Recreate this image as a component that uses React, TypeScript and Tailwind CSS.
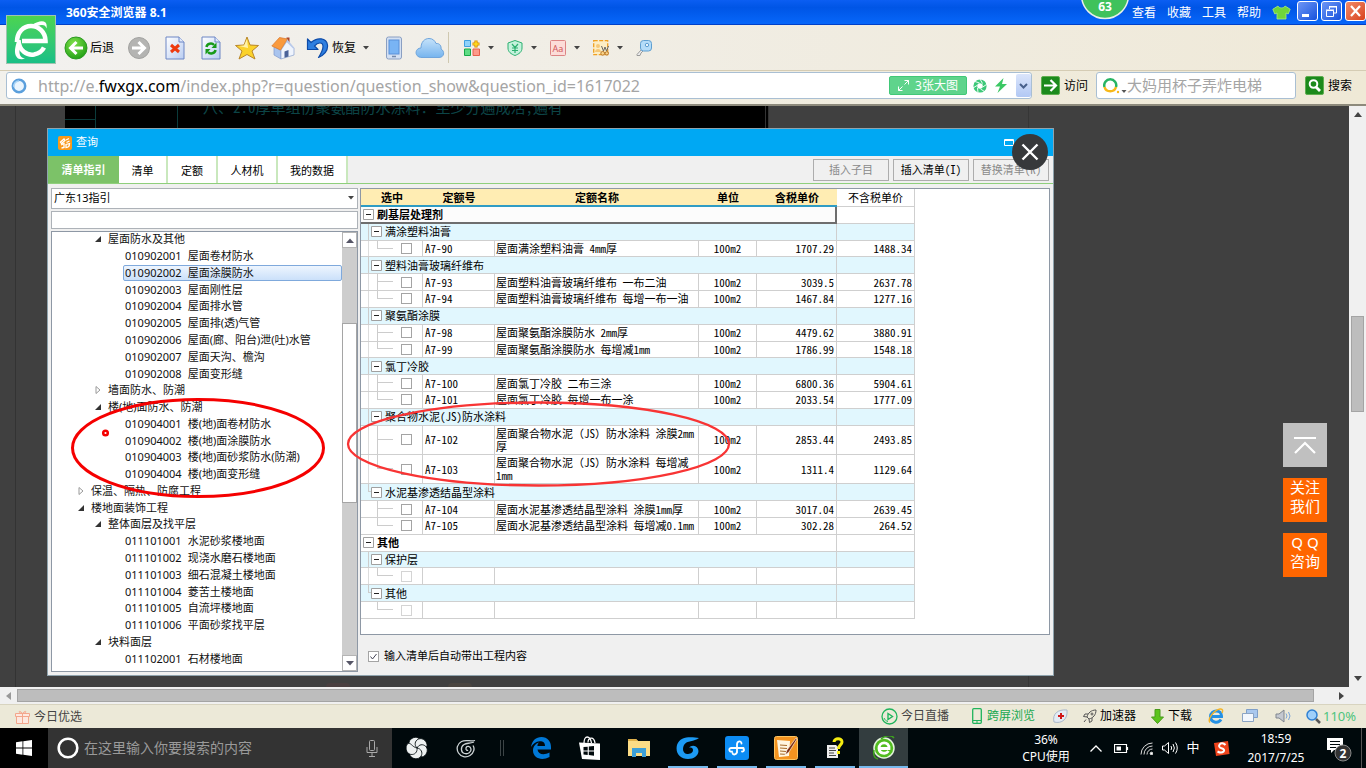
import React from "react";

const UI = "font-['Noto_Sans','Noto_Sans_CJK_SC',sans-serif]";
const GRID = "font-['Noto_Sans_Mono_CJK_SC','Noto_Sans_CJK_SC',monospace]";

/* ---------- browser title bar ---------- */

function TitleBar() {
  const menus = ["查看", "收藏", "工具", "帮助"];
  return (
    <header className="relative flex h-[25px] shrink-0 items-center bg-linear-to-b from-[#0b5ef2] via-[#0055e6] via-30% to-[#0868fb] pl-[66px] text-white">
      <h1 className="text-xs font-bold">360安全浏览器 8.1</h1>
      <div className="absolute inset-x-0 bottom-0 h-px bg-[#0040c8]" />
      <nav className="ml-auto flex h-full items-center">
        {menus.map((m) => (
          <button key={m} className="w-[35px] text-left text-xs whitespace-nowrap">
            {m}
          </button>
        ))}
        <button aria-label="皮肤" className="mr-1.5 w-[19px]">
          <svg viewBox="0 0 19 15" className="h-[15px] w-[19px]">
            <path d="M6 1 .8 4.200 2.800 9 5 8V14h9V8l2.200 1 2-4.800L13 1C12 3.500 7 3.500 6 1Z" fill="#6fd53a" stroke="#a9ee7b" strokeWidth=".8" />
          </svg>
        </button>
        <div className="flex gap-[3px] self-start pt-px">
          <button aria-label="最小化" className="h-5 w-[21px] rounded-[3px] border border-white bg-linear-to-br from-[#6d95f5] to-[#1450dc]">
            <svg viewBox="0 0 19 18" className="h-[18px] w-[19px]">
              <path d="M4 12h7v3H4z" fill="#fff" />
            </svg>
          </button>
          <button aria-label="还原" className="h-5 w-[21px] rounded-[3px] border border-white bg-linear-to-br from-[#6d95f5] to-[#1450dc]">
            <svg viewBox="0 0 19 18" className="h-[18px] w-[19px]" fill="none" stroke="#fff">
              <path d="M7.500 7V5h7v6H12M7 4.500h8" />
              <path d="M4.500 8.500h7v6h-7zM4 8h8" />
            </svg>
          </button>
          <button aria-label="关闭" className="h-5 w-[21px] rounded-[3px] border border-white bg-linear-to-br from-[#f08a68] to-[#d8401a]">
            <svg viewBox="0 0 19 18" className="h-[18px] w-[19px]">
              <path d="m5 4 9 10M14 4 5 14" stroke="#fff" strokeWidth="2.200" />
            </svg>
          </button>
        </div>
      </nav>
      <div className="absolute top-0 right-[237px] z-10 h-5 w-12">
        <svg viewBox="0 0 48 20" className="h-5 w-12">
          <circle cx="24" cy="-5" r="23.500" fill="#3fc25c" stroke="#e9efe9" strokeWidth="1.500" />
        </svg>
        <span className="absolute inset-x-0 top-0 text-center text-xs leading-[14px] font-bold">63</span>
      </div>
    </header>
  );
}

function AppLogo() {
  return (
    <div className="absolute top-[15px] left-1.5 z-20 h-[49px] w-[50px] border border-[#9fc4b0] bg-linear-to-b from-[#4bd44f] to-[#17bf86]">
      <svg viewBox="0 0 48 47" className="h-full w-full">
        <path d="M10 26C10 16 16.500 10 24 10S38.500 16 38.500 25H15" fill="none" stroke="#fff" strokeWidth="4.600" />
        <path d="M11.500 24C12 35 20 39.500 27 38.500c4-.8 8-3 10-7" fill="none" stroke="#fff" strokeWidth="4.500" />
        <path d="M25 9C31 5 36 4.500 38.500 6.500c1 1 1.500 3 1 6-1-4-4.500-4.500-10.500-2Z" fill="#fff" />
        <path d="M9.500 27c-2 6-2.500 12 1.500 15.500 2 1 5 .8 7 .3-6-1.500-6.500-6.800-4.500-12.800Z" fill="#fff" />
      </svg>
    </div>
  );
}

/* ---------- tool bar ---------- */

const cell = "flex h-full w-9 items-center justify-center";

function Caret() {
  return (
    <svg viewBox="0 0 6 4" className="h-1 w-1.5">
      <path d="M0 0h6L3 3.500Z" fill="#444" />
    </svg>
  );
}

function Page({ children }: { children: React.ReactNode }) {
  return (
    <svg viewBox="0 0 20 24" className="h-6 w-5">
      <defs>
        <linearGradient id="sheet" x1="0" y1="0" x2="1" y2="1">
          <stop offset="0" stopColor="#fff" />
          <stop offset="1" stopColor="#b9cdf2" />
        </linearGradient>
      </defs>
      <path d="M1 1h13l5 5v17H1Z" fill="url(#sheet)" stroke="#6c86c4" />
      <path d="M14 1v5h5" fill="#dfe8fa" stroke="#6c86c4" />
      {children}
    </svg>
  );
}

function ToolBar() {
  return (
    <div className="flex h-[46px] shrink-0 items-center border-b border-[#d5ccb4] bg-linear-to-r from-[#f2f1ef] to-[#efe9d8] pl-16">
      <button className="flex w-[57px] items-center gap-0.5 text-xs whitespace-nowrap text-black">
        <svg viewBox="0 0 24 24" className="size-6">
          <defs>
            <radialGradient id="back" cx=".4" cy=".3" r=".8">
              <stop offset="0" stopColor="#7fe04a" />
              <stop offset="1" stopColor="#189a10" />
            </radialGradient>
          </defs>
          <circle cx="12" cy="12" r="11" fill="url(#back)" stroke="#2c9a22" />
          <path d="M19 12H7m5.500-6L6.500 12l6 6" fill="none" stroke="#fff" strokeWidth="3" />
        </svg>
        后退
      </button>
      <button aria-label="前进" className={cell}>
        <svg viewBox="0 0 24 24" className="size-6">
          <circle cx="12" cy="12" r="10.500" fill="#b4b4b2" stroke="#a2a2a0" />
          <path d="M5 12h12m-5.500-6 6 6-6 6" fill="none" stroke="#fff" strokeWidth="3" />
        </svg>
      </button>
      <button aria-label="停止" className={cell}>
        <Page>
          <path d="m6 9 8 7M14 9l-8 7" stroke="#ee3a10" strokeWidth="3" />
        </Page>
      </button>
      <button aria-label="刷新" className={cell}>
        <Page>
          <path d="M5.500 11C6 7.500 11 6.500 13 9" fill="none" stroke="#189a18" strokeWidth="2.500" />
          <path d="M15.500 6.500V12h-5Z" fill="#189a18" />
          <path d="M14.500 14c-.5 3.500-5.500 4.500-7.500 2" fill="none" stroke="#189a18" strokeWidth="2.500" />
          <path d="M4.500 18.500V13h5Z" fill="#189a18" />
        </Page>
      </button>
      <button aria-label="收藏" className={cell}>
        <svg viewBox="0 0 24 24" className="size-6">
          <path d="m12 1 3 8 8.500.5-6.500 5.500 3 8L12 18.500 4 23l3-8L.5 9.500 9 9Z" fill="#fbd22a" stroke="#b8862a" strokeLinejoin="round" />
          <path d="m12 3 1 9-9-2 5-.5Z" fill="#fff2a8" />
        </svg>
      </button>
      <button aria-label="主页" className={cell}>
        <svg viewBox="0 0 24 24" className="size-6">
          <path d="M15.500 1.500h3v6h-3z" fill="#a8452c" />
          <path d="m3 10 7 5v8l-7-4Z" fill="#a9c4ee" stroke="#7f9acb" strokeWidth=".7" />
          <path d="m10 14 6-9 7 7v7l-13 4Z" fill="#eff4fd" stroke="#8aa2cf" strokeWidth=".7" />
          <path d="M13.500 15.500 17.500 14v6.500l-4 1.300Z" fill="#4a6298" />
          <path d="M.8 10 8.500 1.500l8 1.500L9.500 14Z" fill="#f99a3e" stroke="#d9762a" strokeWidth=".7" />
          <path d="m16 3 7.500 9-1.500.5L15.500 6Z" fill="#b9caea" />
        </svg>
      </button>
      <button className="flex w-[75px] items-center gap-[3px] pl-1 text-xs whitespace-nowrap text-black">
        <svg viewBox="0 0 24 24" className="size-6">
          <path d="M2.500 3v10.500H13L9.500 10C13 5.800 18 6 18 10.500c0 4-2 7-4.500 11C20 18.500 23 13.500 22.500 9 21.500 1.500 12 1 6 6.500Z" fill="#2f7fe0" stroke="#0d4ba8" strokeWidth="1.200" strokeLinejoin="round" />
        </svg>
        恢复
        <span className="ml-1"><Caret /></span>
      </button>
      <button aria-label="手机" className={cell}>
        <svg viewBox="0 0 18 24" className="h-6 w-[18px]">
          <rect x="1.500" y="1" width="15" height="22" rx="2" fill="#d4e0f2" stroke="#8a9fc2" />
          <rect x="4" y="4" width="10" height="14" fill="#79b4f4" stroke="#5b90d8" />
          <path d="M7 20.500h4" stroke="#7388aa" strokeWidth="1.500" />
        </svg>
      </button>
      <button aria-label="云" className={cell}>
        <svg viewBox="0 0 30 22" className="h-[22px] w-[30px]">
          <defs>
            <linearGradient id="cloud" x1="0" y1="0" x2="0" y2="1">
              <stop offset="0" stopColor="#c5e2fa" />
              <stop offset="1" stopColor="#76b4ee" />
            </linearGradient>
          </defs>
          <path d="M7 20.500C-1 20.500-.5 11 6 11 6 5 9.500 1.500 14 1.500c4 0 6 2.500 7 5 4-.5 5.500 3 5 5.500 4 2 3.500 8.500-2 8.500Z" fill="url(#cloud)" stroke="#6fa5dc" />
        </svg>
      </button>
      <div className="h-[31px] w-px bg-[#cfc8b0]" />
      <div className="ml-[15px] flex">
        <button aria-label="扩展" className="flex w-[43px] items-center gap-2">
          <svg viewBox="0 0 16 16" className="size-4">
            <path d="M.5.500h6v6h-6z" fill="#8fd2fb" stroke="#3f9fe0" />
            <path d="M.5 9h6v6.500h-6z" fill="#5fdc84" stroke="#18a848" />
            <path d="M9 9h6.500v6.500H9z" fill="#fd9a8a" stroke="#e6604c" />
            <path d="M12 .5v7M8.500 4h7" stroke="#d88a00" strokeWidth="3.200" />
            <path d="M12 1.200v5.600M9.200 4h5.600" stroke="#ffdc20" strokeWidth="1.500" />
          </svg>
          <Caret />
        </button>
        <button aria-label="网银" className="flex w-[43px] items-center gap-2">
          <svg viewBox="0 0 16 16" className="size-4" fill="none" stroke="#2cb070">
            <path d="m8 .5 7 2.500v5c0 4-3 6-7 7.500C4 14 1 12 1 8V3Z" fill="#c4f2dc" />
            <path d="m5 4 3 3.500L11 4M5 8h6M5 10.500h6M8 7.500V13" strokeWidth="1.200" />
          </svg>
          <Caret />
        </button>
        <button aria-label="翻译" className="flex w-[43px] items-center gap-2">
          <svg viewBox="0 0 16 16" className="size-4">
            <rect x=".5" y=".5" width="15" height="15" rx="1" fill="#fcdcd8" stroke="#dc8484" />
            <text x="8" y="11.500" textAnchor="middle" fontSize="9" fill="#d05858" fontFamily="Noto Sans">Aa</text>
          </svg>
          <Caret />
        </button>
        <button aria-label="截图" className="flex w-[43px] items-center gap-2">
          <svg viewBox="0 0 16 16" className="size-4">
            <rect x=".7" y=".7" width="14" height="14" fill="#fdeec4" stroke="#f0a020" strokeWidth="1.300" strokeDasharray="4 1.500" />
            <circle cx="5" cy="6" r="2" fill="#f6c878" />
            <path d="M2 12c0-4 6-4 6 0Z" fill="#f6c878" />
            <path d="m8.500 6 2 5 1.500-4 1.500 4 2-5" fill="none" stroke="#666" />
            <circle cx="9.700" cy="13.300" r="1.900" fill="#fbd488" stroke="#b8782a" />
            <circle cx="13.800" cy="13.300" r="1.700" fill="#fbd488" stroke="#b8782a" />
          </svg>
          <Caret />
        </button>
        <button aria-label="登录管家" className="flex w-[43px] items-center">
          <svg viewBox="0 0 16 16" className="size-4">
            <path d="M1 14.500 6 9l1.500 1.500L5 13l-1 2.500H1Z" fill="#eee" stroke="#999" />
            <rect x="4.500" y=".5" width="11" height="10.500" rx="3" fill="#b4dcf8" stroke="#5f9fd0" />
            <circle cx="11" cy="5" r="1.700" fill="#e8f4fc" stroke="#5f9fd0" />
          </svg>
        </button>
      </div>
    </div>
  );
}

/* ---------- address bar ---------- */

function AddressBar() {
  return (
    <div className="flex h-[35px] shrink-0 items-center border-b-2 border-[#8d8a7c] bg-linear-to-r from-[#f2f1ec] to-[#efe9d6] pr-3.5 pb-1 pl-1.5">
      <div className="flex h-[27px] flex-1 items-center rounded-[3px] border border-[#a9bfd3] bg-white pl-1">
        <svg viewBox="0 0 16 16" className="size-4 shrink-0">
          <circle cx="8" cy="8" r="6.200" fill="#eaf5fe" stroke="#5b9fdc" strokeWidth="2.500" />
          <path d="M3 9a5 5 0 0 1 5-6" fill="none" stroke="#a9d4f6" strokeWidth="1.500" />
        </svg>
        <div className="ml-[11px] flex-1 text-base whitespace-nowrap text-[#a5a5a5]">
          http://e.<span className="text-black">fwxgx.com</span>/index.php?r=question/question_show&amp;question_id=1617022
        </div>
        <button className="flex h-[19px] w-[78px] items-center justify-center gap-1.5 rounded-xs border border-[#41c878] bg-[#5fd48c] text-xs whitespace-nowrap text-white">
          <svg viewBox="0 0 11 11" className="size-[11px]" fill="none" stroke="#fff">
            <path d="M6.500.5h4v4M10.500.5 6.500 4.500M4.500 10.500h-4v-4M.5 10.500l4-4" />
          </svg>
          3张大图
        </button>
        <button aria-label="加速" className="ml-1.5">
          <svg viewBox="0 0 14 14" className="size-3.5" fill="none" stroke="#3cc878">
            <circle cx="7" cy="7" r="4.700" strokeWidth="3.800" />
            <path d="M7 0 9.500 4.500M13.500 5.500 9.800 8M11.500 12.500 7.500 10M5 13.500 4.500 9M0 9 4 6.500M2 2.500 6.500 4" stroke="#fff" strokeWidth=".9" />
          </svg>
        </button>
        <button aria-label="极速模式" className="ml-2">
          <svg viewBox="0 0 12 15" className="h-[15px] w-3">
            <path d="M8.500 0 0 8.500h5L2.500 15 12 6H7Z" fill="#3cc864" />
          </svg>
        </button>
        <button aria-label="历史地址" className="ml-[9px] flex h-[23px] w-[15px] items-center justify-center rounded-xs bg-linear-to-b from-[#dbe5fb] to-[#b2c8f4]">
          <svg viewBox="0 0 9 6" className="h-1.5 w-[9px]">
            <path d="m1 1 3.500 3.500L8 1" fill="none" stroke="#48608c" strokeWidth="2" />
          </svg>
        </button>
      </div>
      <button className="ml-[9px] flex items-center gap-1 text-xs whitespace-nowrap text-black">
        <svg viewBox="0 0 19 19" className="size-[19px]">
          <rect x=".5" y=".5" width="18" height="18" rx="1.500" fill="#1c8a1c" stroke="#5fae50" />
          <path d="M3 9.500h11M9.500 4l5.500 5.500L9.500 15" fill="none" stroke="#fff" strokeWidth="2.200" />
        </svg>
        访问
      </button>
      <div className="ml-2 flex h-[27px] w-[200px] items-center rounded-[3px] border border-[#a9bfd3] bg-white pl-1.5">
        <svg viewBox="0 0 24 16" className="h-4 w-6 shrink-0">
          <path d="M1.500 9A6 6 0 1 1 13 9" fill="none" stroke="#28b464" strokeWidth="2.500" />
          <path d="M1.500 9A6 6 0 0 0 13 9" fill="none" stroke="#f8b818" strokeWidth="2.500" />
          <circle cx="15" cy="14" r="1.200" fill="#f8b818" />
          <path d="M18.500 12h5L21 15Z" fill="#555" />
        </svg>
        <input aria-label="搜索" placeholder="大妈用杯子弄炸电梯" className="w-full min-w-0 text-[15px] outline-none placeholder:text-[#a5a5a5]" />
      </div>
      <button className="ml-[9px] flex items-center gap-1 text-xs whitespace-nowrap text-black">
        <svg viewBox="0 0 19 19" className="size-[19px]">
          <rect x=".5" y=".5" width="18" height="18" rx="1.500" fill="#1c8a1c" stroke="#5fae50" />
          <circle cx="8.500" cy="8" r="3.800" fill="none" stroke="#fff" strokeWidth="2" />
          <path d="m11 11 4 4" stroke="#fff" strokeWidth="2.800" />
        </svg>
        搜索
      </button>
    </div>
  );
}

/* ---------- query dialog ---------- */

type Node = { level: 0 | 1 | 2; open?: boolean; code?: string; name: string; selected?: boolean };

const leaf = (code: string, name: string, selected = false): Node => ({ level: 2, code, name, selected });

const nodes: Node[] = [
  { level: 1, open: true, name: "屋面防水及其他" },
  leaf("010902001", "屋面卷材防水"),
  leaf("010902002", "屋面涂膜防水", true),
  leaf("010902003", "屋面刚性层"),
  leaf("010902004", "屋面排水管"),
  leaf("010902005", "屋面排(透)气管"),
  leaf("010902006", "屋面(廊、阳台)泄(吐)水管"),
  leaf("010902007", "屋面天沟、檐沟"),
  leaf("010902008", "屋面变形缝"),
  { level: 1, open: false, name: "墙面防水、防潮" },
  { level: 1, open: true, name: "楼(地)面防水、防潮" },
  leaf("010904001", "楼(地)面卷材防水"),
  leaf("010904002", "楼(地)面涂膜防水"),
  leaf("010904003", "楼(地)面砂浆防水(防潮)"),
  leaf("010904004", "楼(地)面变形缝"),
  { level: 0, open: false, name: "保温、隔热、防腐工程" },
  { level: 0, open: true, name: "楼地面装饰工程" },
  { level: 1, open: true, name: "整体面层及找平层" },
  leaf("011101001", "水泥砂浆楼地面"),
  leaf("011101002", "现浇水磨石楼地面"),
  leaf("011101003", "细石混凝土楼地面"),
  leaf("011101004", "菱苦土楼地面"),
  leaf("011101005", "自流坪楼地面"),
  leaf("011101006", "平面砂浆找平层"),
  { level: 1, open: true, name: "块料面层" },
  leaf("011102001", "石材楼地面"),
];

function Arrow({ open }: { open?: boolean }) {
  return (
    <svg viewBox="0 0 8 8" className="mr-1.5 size-2 shrink-0">
      {open ? <path d="M7 1v6H1Z" fill="#333" /> : <path d="M2 .5 6 4 2 7.500Z" fill="#fff" stroke="#999" />}
    </svg>
  );
}

function Tree() {
  return (
    <div className="flex min-h-0 flex-1 border border-[#8e98a5] bg-white">
      <ul className="-mt-px grid flex-1 auto-rows-fr pb-1 text-[11px] leading-[14px] text-[#111]">
        {nodes.map((n) => {
          if (n.level === 2)
            return (
              <li key={n.code} className="flex pl-[71px]">
                <button
                  className={
                    n.selected
                      ? "flex flex-1 items-center gap-1.5 rounded-xs border border-[#7fa9dc] bg-linear-to-b from-[#eef5fe] to-[#cbe0fa] pl-px whitespace-nowrap"
                      : "flex flex-1 items-center gap-1.5 border border-transparent pl-px whitespace-nowrap"
                  }
                >
                  <span>{n.code}</span>
                  <span>{n.name}</span>
                </button>
              </li>
            );
          return (
            <li key={n.name} className={n.level === 1 ? "flex pl-[42px]" : "flex pl-[25px]"}>
              <button className="flex items-center whitespace-nowrap">
                <Arrow open={n.open} />
                {n.name}
              </button>
            </li>
          );
        })}
      </ul>
      <div className="flex w-[15px] flex-col bg-[#cdcdcd]">
        <button aria-label="向上" className="flex h-4 items-center justify-center border border-[#b4b4b4] bg-white">
          <svg viewBox="0 0 8 5" className="h-[5px] w-2"><path d="M0 5h8L4 .5Z" fill="#556" /></svg>
        </button>
        <div className="flex-75" />
        <div className="flex-179 border border-[#a5a5a5] bg-white" />
        <div className="flex-152" />
        <button aria-label="向下" className="flex h-4 items-center justify-center border border-[#b4b4b4] bg-white">
          <svg viewBox="0 0 8 5" className="h-[5px] w-2"><path d="M0 0h8L4 4.500Z" fill="#556" /></svg>
        </button>
      </div>
    </div>
  );
}

type Row =
  | { kind: "top"; name: string; focus?: boolean }
  | { kind: "group"; name: string; end?: boolean }
  | { kind: "item"; code: string; name: string; unit: string; tax: string; net: string; end?: boolean; tall?: boolean; inner?: boolean };

const item = (code: string, name: string, tax: string, net: string, end = false, tall = false, inner = true): Row => ({
  kind: "item", code, name, unit: code ? "100m2" : "", tax, net, end, tall, inner,
});

const rows: Row[] = [
  { kind: "top", name: "刷基层处理剂", focus: true },
  { kind: "group", name: "满涂塑料油膏" },
  item("A7-90", "屋面满涂塑料油膏 4mm厚", "1707.29", "1488.34", true),
  { kind: "group", name: "塑料油膏玻璃纤维布" },
  item("A7-93", "屋面塑料油膏玻璃纤维布 一布二油", "3039.5", "2637.78"),
  item("A7-94", "屋面塑料油膏玻璃纤维布 每增一布一油", "1467.84", "1277.16", true),
  { kind: "group", name: "聚氨酯涂膜" },
  item("A7-98", "屋面聚氨酯涂膜防水 2mm厚", "4479.62", "3880.91"),
  item("A7-99", "屋面聚氨酯涂膜防水 每增减1mm", "1786.99", "1548.18", true),
  { kind: "group", name: "氯丁冷胶" },
  item("A7-100", "屋面氯丁冷胶 二布三涂", "6800.36", "5904.61"),
  item("A7-101", "屋面氯丁冷胶 每增一布一涂", "2033.54", "1777.09", true),
  { kind: "group", name: "聚合物水泥(JS)防水涂料" },
  item("A7-102", "屋面聚合物水泥（JS）防水涂料 涂膜2mm厚", "2853.44", "2493.85", false, true),
  item("A7-103", "屋面聚合物水泥（JS）防水涂料 每增减1mm", "1311.4", "1129.64", true, true),
  { kind: "group", name: "水泥基渗透结晶型涂料", end: true },
  item("A7-104", "屋面水泥基渗透结晶型涂料 涂膜1mm厚", "3017.04", "2639.45", false, false, false),
  item("A7-105", "屋面水泥基渗透结晶型涂料 每增减0.1mm", "302.28", "264.52", true, false, false),
  { kind: "top", name: "其他" },
  { kind: "group", name: "保护层" },
  item("", "", "", "", true),
  { kind: "group", name: "其他", end: true },
  item("", "", "", "", true, false, false),
];

function Minus() {
  return (
    <svg viewBox="0 0 11 11" className="size-[11px] shrink-0">
      <path d="M.5.500h10v10H.5z" fill="#fff" stroke="#a0a0a0" />
      <path d="M3 5.500h5" stroke="#222" />
    </svg>
  );
}

const td = "border-r border-b border-[#cfcfcf] p-0";

function PriceTable() {
  return (
    <table className={`${GRID} h-[430px] w-[554px] table-fixed border-separate border-spacing-0 text-[11px] leading-[13px] text-black`}>
      <colgroup>
        <col className="w-[62px]" />
        <col className="w-[72px]" />
        <col className="w-[204px]" />
        <col className="w-[58px]" />
        <col className="w-20" />
        <col className="w-[78px]" />
      </colgroup>
      <thead>
        <tr>
          {["选中", "定额号", "定额名称", "单位", "含税单价"].map((h) => (
            <th key={h} className="h-[18px] border-b-2 border-[#2f9cc4] bg-[#ffedb3] p-0 font-bold">{h}</th>
          ))}
          <th className={`${td} font-normal`}>不含税单价</th>
        </tr>
      </thead>
      <tbody>
        {rows.map((r, i) => {
          if (r.kind === "top")
            return (
              <tr key={i}>
                <td colSpan={5} className={r.focus ? "h-4 border-r-2 border-b-2 border-[#6e6e6e] bg-[#fcfcfc] p-0" : `${td} h-4`}>
                  <div className="flex items-center gap-[3px] pl-0.5 font-bold"><Minus />{r.name}</div>
                </td>
                <td className={td} />
              </tr>
            );
          if (r.kind === "group")
            return (
              <tr key={i} className="bg-[#e1f7fe]">
                <td colSpan={5} className={`${td} relative h-4`}>
                  <span className={r.end ? "absolute top-0 left-[7px] h-1/2 w-[3px] border-b border-l border-[#ccc]" : "absolute inset-y-0 left-[7px] border-l border-[#ccc]"} />
                  <div className="flex items-center gap-[3px] pl-2.5"><Minus />{r.name}</div>
                </td>
                <td className={td} />
              </tr>
            );
          return (
            <tr key={i}>
              <td className={r.tall ? `${td} relative h-7` : `${td} relative h-4`}>
                {r.inner && <span className="absolute inset-y-0 left-[7px] border-l border-[#ddd]" />}
                <span className="absolute top-0 left-4 h-1/2 w-4 border-b border-l border-[#ccc]" />
                {!r.end && <span className="absolute inset-y-0 left-4 border-l border-[#ccc]" />}
                <input
                  type="checkbox"
                  aria-label={r.code || "空行"}
                  disabled={!r.code}
                  className="ml-10 block size-[11px] appearance-none border border-[#a4a4a4] bg-white disabled:border-[#d4d4d4]"
                />
              </td>
              <td className={`${td} pl-0.5`}>{r.code}</td>
              <td className={`${td} pl-px`}>{r.name}</td>
              <td className={`${td} text-center`}>{r.unit}</td>
              <td className={`${td} pr-0.5 text-right`}>{r.tax}</td>
              <td className={`${td} pr-0.5 text-right`}>{r.net}</td>
            </tr>
          );
        })}
      </tbody>
    </table>
  );
}

function Dialog() {
  const action = "h-[22px] w-19 border border-[#adadad] bg-[#f0f0f0] text-[11px] whitespace-nowrap";
  const tab = "h-full border-r-2 border-[#c9e8bd] bg-white pt-[3px] text-[11px] whitespace-nowrap";
  return (
    <section aria-label="查询" className="relative mt-[22px] ml-[47px] flex h-[548px] w-full max-w-[1007px] flex-col border border-[#8fa3ad] bg-[#f0f0f0]">
      <div className="flex h-[27px] shrink-0 items-center bg-[#00a8f3] pl-2.5 text-white">
        <svg viewBox="0 0 14 14" className="size-3.5">
          <rect width="14" height="14" rx="2" fill="#f89a1c" />
          <path d="M2.500 6 6 3l1 1.500L3.500 7.500ZM8 4l3-1.500M8.500 6.500 11.500 5M3 9l3-1.500v4L3.500 12M8 8.500l3.500-1C11.500 10 10 11.500 8 11.500Z" fill="none" stroke="#fff" strokeWidth="1.300" />
        </svg>
        <h2 className="ml-1 text-[11px]">查询</h2>
        <button aria-label="最大化" className="mr-[39px] ml-auto">
          <svg viewBox="0 0 10 7" className="h-[7px] w-2.5"><path d="M.5.500h9v6h-9zM0 1.500h10" fill="none" stroke="#fff" /></svg>
        </button>
      </div>
      <div className="flex h-7 shrink-0 items-center border-b border-[#8fcf7c]">
        <button className="h-full w-[71px] bg-[#7cc268] pt-px text-[11px] font-bold whitespace-nowrap text-white">清单指引</button>
        <button className={`${tab} w-[49px]`}>清单</button>
        <button className={`${tab} w-[50px]`}>定额</button>
        <button className={`${tab} w-[60px]`}>人材机</button>
        <button className={`${tab} w-[70px]`}>我的数据</button>
        <div className={`${GRID} mr-1 ml-auto flex gap-1`}>
          <button disabled className={`${action} text-[#8a8a8a]`}>插入子目</button>
          <button className={`${action} text-black`}>插入清单(I)</button>
          <button disabled className={`${action} text-[#8a8a8a]`}>替换清单(R)</button>
        </div>
      </div>
      <div className="flex min-h-0 flex-1 gap-0.5 px-[3px] pt-1">
        <div className="flex w-[307px] shrink-0 flex-col gap-0.5 pb-[3px]">
          <div className="relative">
            <select aria-label="清单指引库" className="block h-[21px] w-full appearance-none border border-[#adb2b8] bg-white pl-0.5 text-[11px] text-black">
              <option>广东13指引</option>
            </select>
            <span className="pointer-events-none absolute top-2 right-1"><Caret /></span>
          </div>
          <input aria-label="筛选清单" className="h-[18px] w-full border border-[#adb2b8] bg-white text-[11px]" />
          <Tree />
        </div>
        <div className="flex min-w-0 flex-1 flex-col">
          <div className="h-[447px] border border-[#8e98a5] bg-white">
            <PriceTable />
          </div>
          <label className="flex items-center gap-[5px] pt-3.5 pl-2 text-[11px] leading-[14px] text-black">
            <span className="relative size-[11px]">
              <input type="checkbox" defaultChecked className="block size-[11px] appearance-none border border-[#a4a4a4] bg-white" />
              <svg viewBox="0 0 11 11" className="pointer-events-none absolute inset-0 size-[11px]"><path d="m2.500 5.500 2 2.500 4-5" fill="none" stroke="#445" /></svg>
            </span>
            输入清单后自动带出工程内容
          </label>
        </div>
      </div>
      <svg className="pointer-events-none absolute inset-0 h-full w-full" fill="none">
        <ellipse cx="150" cy="319" rx="125.500" ry="48.500" stroke="#f50000" strokeWidth="3" />
        <circle cx="57.500" cy="304" r="2.300" stroke="#f50000" strokeWidth="2.500" />
        <ellipse cx="490.500" cy="315" rx="190.500" ry="41.500" stroke="#f83434" strokeWidth="2.300" />
      </svg>
      <button aria-label="关闭查询" className="absolute top-[5px] right-[5px] flex size-9 items-center justify-center rounded-full bg-[#37393b]">
        <svg viewBox="0 0 18 18" className="size-[18px]"><path d="m1.500 1.500 15 15M16.500 1.500l-15 15" stroke="#fff" strokeWidth="2.400" /></svg>
      </button>
    </section>
  );
}

/* ---------- page view ---------- */

function Backdrop() {
  return (
    <div aria-hidden="true" className="absolute inset-0 overflow-hidden">
      <div className="absolute inset-y-0 left-[15px] w-px bg-[#333]" />
      <div className="absolute inset-y-0 left-[1028px] w-px bg-[#363636]" />
      <div className="absolute top-0 left-[65px] h-[30px] w-[704px] border-r-4 border-double border-[#333] bg-black">
        <div className="absolute top-0 left-0 h-full w-[31px] border-r border-[#0b3b3b]" />
        <div className="absolute top-[13px] left-0 h-px w-[31px] bg-[#0b3b3b]" />
        <div className="absolute top-0 left-28 h-full w-px bg-[#0b3b3b]" />
        <p className="absolute -top-2 left-[138px] font-['Noto_Sans_Mono_CJK_SC','Noto_Sans_CJK_SC',monospace] text-[15px] leading-[18px] font-light whitespace-nowrap text-[#0c4446]">
          八、2.0厚单组份聚氨酯防水涂料：至少分遍成活,遍有
        </p>
      </div>
      <div className="absolute bottom-0 left-[326px] h-1 w-6 rounded-t-full bg-[#4a3f40]" />
      <div className="absolute bottom-0 left-[448px] h-1 w-6 rounded-t-full bg-[#4a4540]" />
    </div>
  );
}

function SideButtons() {
  const b = "block h-11 w-11 bg-[#ff6600] text-center text-[15px] leading-[19px] text-white";
  return (
    <aside className="absolute top-[317px] right-[22px] flex flex-col gap-[11px]">
      <button aria-label="返回顶部" className="flex size-11 items-center justify-center bg-[#c0c0c0]">
        <svg viewBox="0 0 22 18" className="h-[18px] w-[22px]" fill="none" stroke="#fff" strokeWidth="2.200">
          <path d="M0 2h22M1 17 11 7l10 10" />
        </svg>
      </button>
      <a href="#follow" className={b}>关注<br />我们</a>
      <a href="#qq" className={b}>Q Q<br />咨询</a>
    </aside>
  );
}

function Viewport() {
  return (
    <div className="flex min-h-0 flex-1 flex-col bg-[#f0f0f0]">
      <div className="flex min-h-0 flex-1">
        <main className="relative min-w-0 flex-1 bg-[#404040]">
          <Backdrop />
          <Dialog />
          <SideButtons />
        </main>
        <div className="flex w-[17px] flex-col items-center py-1.5">
          <svg viewBox="0 0 8 5" className="h-[5px] w-2"><path d="M0 5h8L4 0Z" fill="#444" /></svg>
          <div className="flex-200" />
          <div className="w-[13px] flex-94 border border-[#a4a4a4] bg-[#bdbdbd]" />
          <div className="flex-265" />
          <svg viewBox="0 0 8 5" className="h-[5px] w-2"><path d="M0 0h8L4 5Z" fill="#444" /></svg>
        </div>
      </div>
      <div className="flex h-[17px] shrink-0 items-center pr-[22px] pl-1.5">
        <svg viewBox="0 0 5 8" className="h-2 w-[5px]"><path d="M5 0v8L0 4Z" fill="#999" /></svg>
        <div className="mr-[25px] ml-1.5 h-[13px] flex-1 border border-[#a4a4a4] bg-[#bdbdbd]" />
        <svg viewBox="0 0 5 8" className="h-2 w-[5px]"><path d="M0 0v8l5-4Z" fill="#444" /></svg>
      </div>
    </div>
  );
}

/* ---------- status bar ---------- */

function StatusBar() {
  const s = "flex items-center whitespace-nowrap";
  return (
    <div className="flex h-6 shrink-0 items-center border-t border-[#d8d4c0] bg-[#ece9d8] pr-2.5 pl-[15px] text-xs text-[#444]">
      <button className={`${s} gap-1`}>
        <svg viewBox="0 0 15 14" className="h-3.5 w-[15px]" fill="none" stroke="#f3a68c">
          <path d="M.5 3.500h14v3H.5zM1.500 6.500h12v7h-12zM7.500 3.500v10M7.500 3.500C2 3 4-1 7.500 3.500 11-1 13 3 7.500 3.500" fill="#fde8e0" />
        </svg>
        今日优选
      </button>
      <div className="ml-auto flex items-center">
        <button className={`${s} w-[91px] gap-[3px]`}>
          <svg viewBox="0 0 17 17" className="size-[17px]" fill="none" stroke="#20b45c">
            <circle cx="8.500" cy="8.500" r="7.500" strokeWidth="1.300" />
            <path d="M7 5.500v6l4.500-3Z" strokeWidth="1.400" />
            <path d="M3 10c1 2 2 3 4 3.500" />
          </svg>
          今日直播
        </button>
        <button className={`${s} w-[81px] gap-[5px] text-[#18a850]`}>
          <svg viewBox="0 0 10 16" className="h-4 w-2.5" fill="none" stroke="#20b45c">
            <rect x=".7" y=".7" width="8.600" height="14.600" rx="1" strokeWidth="1.300" />
            <path d="M1 12.500h8M4 14h2" />
          </svg>
          跨屏浏览
        </button>
        <button aria-label="医生" className={`${s} w-[30px]`}>
          <svg viewBox="0 0 15 14" className="h-3.5 w-[15px]">
            <path d="M1 13C-1 5 5 0 14 1c1 9-5 14-13 12Z" fill="#e4ebf4" stroke="#aab8c8" />
            <path d="M8 4v6M5 7h6" stroke="#d01818" strokeWidth="2" />
          </svg>
        </button>
        <button className={`${s} w-[68px] gap-[3px] text-black`}>
          <svg viewBox="0 0 14 14" className="size-3.5" fill="none" stroke="#555">
            <path d="M13 1C8 1 5 4 4 8l2 2c4-1 7-4 7-9ZM5 5H2L.5 7.500 4 8M9 9v3L6.500 13.500 6 10M3 10.500l-2 2.500" />
            <circle cx="9" cy="5" r="1" />
          </svg>
          加速器
        </button>
        <button className={`${s} w-[57px] gap-1 text-black`}>
          <svg viewBox="0 0 13 15" className="h-[15px] w-[13px]">
            <path d="M4 .5h5V8h3.500L6.500 14.500.5 8H4Z" fill="#5cc41c" stroke="#4a9a1c" />
          </svg>
          下载
        </button>
        <button aria-label="内核" className={`${s} w-[34px]`}>
          <svg viewBox="0 0 16 16" className="size-4" fill="none">
            <path d="M3 8.500h10.500C14 1 3 1 2.500 8.500 2.500 14.500 10 16 13 11.500" stroke="#2490e4" strokeWidth="3" />
            <path d="M2 14.500C-1 11 6 2 12 1c3-.5 3 2 2 4" stroke="#f4b428" strokeWidth="1.400" />
          </svg>
        </button>
        <button aria-label="窗口" className={`${s} w-[33px]`}>
          <svg viewBox="0 0 16 14" className="h-3.5 w-4">
            <path d="M4.500.5h11v8h-11z" fill="#a9c8ee" stroke="#7f9fc8" />
            <path d="M.5 4.500h11v8H.5z" fill="#f2f7fd" stroke="#8aa4c4" />
          </svg>
        </button>
        <button aria-label="静音" className={`${s} w-[31px]`}>
          <svg viewBox="0 0 16 14" className="h-3.5 w-4">
            <path d="M1 5h3l5-4v12L4 9H1Z" fill="#c4c8d0" stroke="#80868e" />
            <path d="M11 4.500q2 2.500 0 5M13.500 3q3 4 0 8" fill="none" stroke="#7aa4d8" />
          </svg>
        </button>
        <button className={`${s} w-[50px] gap-0.5 text-[#4cc47c]`}>
          <svg viewBox="0 0 15 15" className="size-[15px] shrink-0">
            <path d="m10 10 4 4" stroke="#555" strokeWidth="2.500" />
            <circle cx="6" cy="6" r="5" fill="#9fd0fb" stroke="#2f80d4" strokeWidth="1.500" />
          </svg>
          <span className="text-[13px]">110%</span>
        </button>
      </div>
    </div>
  );
}

/* ---------- task bar ---------- */

function Task({ label, running, active, children }: { label: string; running?: boolean; active?: boolean; children: React.ReactNode }) {
  return (
    <button aria-label={label} className={active ? "flex h-full w-[49px] flex-col items-center bg-[#333d3f]" : "flex h-full w-[49px] flex-col items-center"}>
      <span className="flex flex-1 items-center pt-0.5">{children}</span>
      <span className={active ? "h-0.5 w-full bg-[#76b9ed]" : running ? "h-0.5 w-10 bg-[#76b9ed]" : "h-0.5 w-10"} />
    </button>
  );
}

function TaskBar() {
  return (
    <footer className="flex h-10 shrink-0 items-center bg-[#00090c] text-white">
      <button aria-label="开始" className="flex h-full w-12 items-center justify-center bg-black">
        <svg viewBox="0 0 16 16" className="size-4" fill="#fff">
          <path d="M0 2.200 6.500 1.300V7.600H0ZM7.300 1.200 16 0V7.600H7.300ZM0 8.400H6.500V14.700L0 13.800ZM7.300 8.400H16V16L7.300 14.800Z" />
        </svg>
      </button>
      <div className="flex h-full w-[344px] items-center bg-[#333] pr-3.5 pl-2">
        <svg viewBox="0 0 24 24" className="size-6"><circle cx="12" cy="12" r="9.300" fill="none" stroke="#fff" strokeWidth="2.600" /></svg>
        <input aria-label="搜索内容" placeholder="在这里输入你要搜索的内容" className="ml-1 min-w-0 flex-1 text-sm outline-none placeholder:text-[#9a9a9a]" />
        <svg viewBox="0 0 12 17" className="h-[17px] w-3" fill="none" stroke="#aaa">
          <rect x="3.500" y=".5" width="5" height="10" rx="1" />
          <path d="M1 7v5.500h10V7M6 13v3M3 16.500h6" />
        </svg>
      </div>
      <div className="flex h-full items-center">
        <Task label="风扇">
          <svg viewBox="0 0 22 22" className="size-[22px]" fill="#eef2f2" stroke="#00090c" strokeWidth=".8">
            {[-20, 52, 124, 196, 268].map((a) => (
              <path key={a} transform={`rotate(${a} 11 11)`} d="M11 11C7 11.500 4 8.500 4.800 4.500 6-.5 13-1 15.500 1.800 17.500 5 12 6 11 11Z" />
            ))}
          </svg>
        </Task>
        <Task label="螺旋">
          <svg viewBox="0 0 20 20" className="size-5" fill="none" stroke="#cdd4d6" strokeWidth="1.300">
            <path d="M19 2.500C15 4 10 1 5.500 3.500 1 6 0 11 2.500 15S10 20 14 17.500s5-7 3-10" />
            <path d="M18 4C13 6 11 4.500 8 6.500c-4 2.500-3 8 .5 9s7-1.500 6.500-4.500-4.500-3.500-5-1 1.500 2.500 2 2" />
          </svg>
        </Task>
        <div className="mr-3 ml-2.5 h-4 w-1 border-x border-[#3c4446]" />
        <Task label="Edge">
          <svg viewBox="0 0 20 22" className="h-[22px] w-5">
            <path d="M0 10C1 3.500 5 0 10.500 0 16.500 0 20 4.500 20 10v2.500H6.500C7 17.500 13 18.500 18.500 15.500V20C11 24 2 21.500 2 13.500 2 9.500 4.500 6.500 8 5.500 7 6.500 6.500 7.500 6.400 9H14C14 4.500 11 4 8.500 4.200 5 4.500 2 6.500 0 10Z" fill="#0078d7" />
          </svg>
        </Task>
        <Task label="应用商店">
          <svg viewBox="0 0 22 24" className="h-6 w-[22px]">
            <path d="M0 6.500 21 7.500V24L3 23Z" fill="#fff" />
            <path d="M5 7C5-1 11-1 12.500 7M9 6.500C9 1 15 0 16 7" fill="none" stroke="#fff" strokeWidth="1.300" />
            <path d="m4.500 11 4.200-.3V14.500H4.500ZM9.800 10.500 15 10v4.500H9.800ZM4.500 15.500H8.700V19l-4.200-.4ZM9.800 15.500H15v4.200l-5.200-.6Z" fill="#00090c" />
          </svg>
        </Task>
        <Task label="文件资源管理器">
          <svg viewBox="0 0 22 20" className="h-5 w-[22px]">
            <path d="M0 1h8l2 2h12v15H0Z" fill="#fbdc86" />
            <path d="M0 1h8l2 2H0Z" fill="#e0b24c" />
            <path d="M4 19V10h14v9h-4v-4H8v4Z" fill="#3c9fd8" />
          </svg>
        </Task>
        <Task label="飓风浏览器" running>
          <svg viewBox="0 0 24 24" className="size-6">
            <path d="M23 2C17 1 4-1 1 9c-2 8 3 14 11 14 7 0 12-5 10-10-2-4-7-4-9-1 2-1 4 0 4 2 0 3-3 4-6 4-4-1-5-5-3-9 3-5 10-3 15-7Z" fill="#1c9af4" />
          </svg>
        </Task>
        <Task label="造价云" running>
          <svg viewBox="0 0 24 24" className="size-6">
            <rect width="24" height="24" rx="3" fill="#0c8cf4" />
            <path d="M18.500 12H6.500c-3.500 0-2.500 4.500.5 3.500M12 16.500V8.500c0-4 4.500-4 4.500-1M12 15c0 4.500-4.500 4-4.500 2M16.500 12c3.500 0 3 4 .5 3.500" fill="none" stroke="#fff" strokeWidth="1.800" strokeLinecap="round" />
          </svg>
        </Task>
        <Task label="记事" running>
          <svg viewBox="0 0 24 24" className="size-6">
            <rect x=".5" y=".5" width="23" height="23" rx="2" fill="#f49420" stroke="#fcc460" />
            <path d="m3 4 13 1-1 15-10 1Z" fill="#fff6e0" />
            <path d="m6 9 7 .5M6 12l7 .5M6 15l6 .5M6 18l5 .3" stroke="#a86a28" />
            <path d="M22 2 13 14l-2 5 4-3 8-13Z" fill="#7c2c10" stroke="#fff" strokeWidth=".6" />
          </svg>
        </Task>
        <Task label="帮助文档" running>
          <svg viewBox="0 0 18 22" className="h-[22px] w-[18px]">
            <path d="M1 8h9l2 2v11H1Z" fill="#eee" />
            <path d="M3 11h6M3 13.500h7M3 16h5M3 18.500h7" stroke="#444" />
            <path d="M8 5C8 1 16 .5 16 5c0 3-3.500 3-3.500 7" fill="none" stroke="#f4ec10" strokeWidth="3" />
            <path d="M11 14h3v3h-3z" fill="#f4ec10" />
          </svg>
        </Task>
        <Task label="360安全浏览器" active>
          <svg viewBox="0 0 24 24" className="size-6">
            <circle cx="12" cy="12" r="10" fill="#52bc20" stroke="#e4f4dc" strokeWidth="1.500" />
            <path d="M7 12.500h10C17.500 5 7 5 7 12.500c.5 5.500 7 6 9.500 2.500" fill="none" stroke="#fff" strokeWidth="2.800" />
            <path d="M9 3C14-1 20-1 22 2M2 14c-1 5 0 8 4 9" fill="none" stroke="#3ca41c" strokeWidth="1.500" />
          </svg>
        </Task>
      </div>
      <div className="ml-auto flex h-full items-center text-xs">
        <div className="w-14 text-center leading-[17px]">36%<br />CPU使用</div>
        <button aria-label="显示隐藏的图标" className="ml-2 flex w-7 justify-center">
          <svg viewBox="0 0 12 7" className="h-[7px] w-3"><path d="m.5 6.500 5.500-5.500 5.500 5.500" fill="none" stroke="#fff" strokeWidth="1.300" /></svg>
        </button>
        <div className="flex w-[22px] justify-center">
          <svg viewBox="0 0 15 9" className="h-[9px] w-[15px]"><path d="M.5.500h12v8H.5zM13.500 3v3" fill="none" stroke="#fff" strokeWidth="1.200" /><path d="M2.500 2.500H7v4H2.500z" fill="#fff" /></svg>
        </div>
        <div className="flex w-7 justify-center">
          <svg viewBox="0 0 13 13" className="size-[13px]" fill="none" stroke="#ddd"><path d="M1 12.500A11.500 11.500 0 0 1 12.500 1M4 12.500A8.500 8.500 0 0 1 12.500 4M7 12.500A5.500 5.500 0 0 1 12.500 7" /><circle cx="11.500" cy="11.500" r="1.300" fill="#fff" /></svg>
        </div>
        <div className="flex w-5 justify-center">
          <svg viewBox="0 0 16 14" className="h-3.5 w-4" fill="none" stroke="#fff"><path d="M.5 5h2L6.500 1.500v11L2.500 9h-2ZM9 5q1.300 2 0 4M11 3q2.800 4 0 8M13.500 1.500q3.500 5.500 0 11" /></svg>
        </div>
        <div className="w-[26px] text-center text-[13px]">中</div>
        <div className="flex w-[30px] justify-center">
          <svg viewBox="0 0 17 17" className="size-[17px]">
            <path d="M1 3 15 1l1.500 13L3 16Z" fill="#f0441c" />
            <path d="M12.500 5C8-.0 3 7 8.500 8.300c5.500 1.200 1.500 6.200-4 3.200" fill="none" stroke="#fff" strokeWidth="2" />
          </svg>
        </div>
        <div className="w-20 text-center leading-[19px]">18:59<br />2017/7/25</div>
        <button aria-label="通知" className="mr-[9px] ml-2.5">
          <svg viewBox="0 0 26 26" className="mt-1 size-[26px]">
            <path d="M1 1h16v12H8l-3 3v-3H1Z" fill="#fff" />
            <path d="M4 4.500h10M4 7.500h10M4 10.500h6" stroke="#00090c" />
            <circle cx="17" cy="16" r="8" fill="#333" stroke="#888" />
            <text x="17" y="20.500" textAnchor="middle" fontSize="12" fontWeight="700" fill="#fff" fontFamily="Noto Sans">2</text>
          </svg>
        </button>
        <div className="mr-1 h-full w-px bg-[#555]" />
      </div>
    </footer>
  );
}

export default function App() {
  return (
    <div className={`${UI} relative flex h-screen min-h-[768px] flex-col overflow-hidden`}>
      <AppLogo />
      <TitleBar />
      <ToolBar />
      <AddressBar />
      <Viewport />
      <StatusBar />
      <TaskBar />
    </div>
  );
}
